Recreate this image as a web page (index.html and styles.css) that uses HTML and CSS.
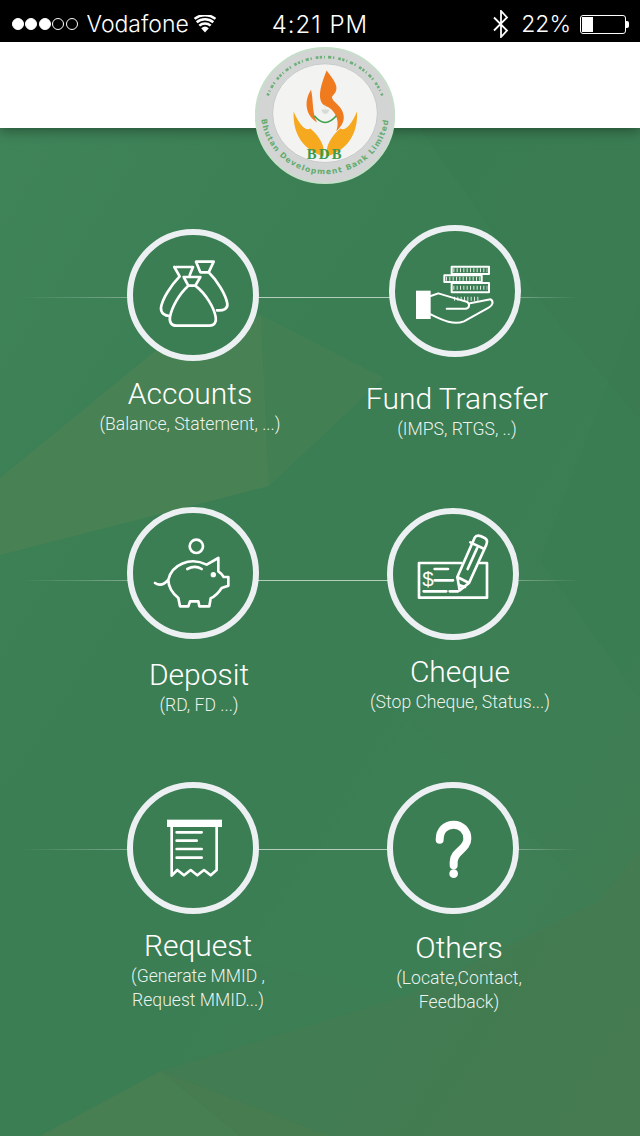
FILE: index.html
```html
<!DOCTYPE html>
<html lang="en">
<head>
<meta charset="utf-8">
<title>Bhutan Development Bank</title>
<link rel="stylesheet" href="styles.css">
</head>
<body>
<div class="page">
  <div class="status">
    <div class="status-left">
      <span class="signal"><i class="dot on"></i><i class="dot on"></i><i class="dot on"></i><i class="dot"></i><i class="dot"></i></span>
      <span class="carrier">Vodafone</span>
      <svg class="wifi" viewBox="0 0 22 18"><path d="M11 17.5 7.2 13.2a5.8 5.8 0 0 1 7.6 0Z" fill="#fff"/><path d="M5.3 10.6a8.8 8.8 0 0 1 11.4 0M2.7 7.2a13 13 0 0 1 16.6 0M.6 3.9a16.4 16.4 0 0 1 20.8 0" fill="none" stroke="#fff" stroke-width="2.5"/></svg>
    </div>
    <div class="clock">4:21 PM</div>
    <div class="status-right">
      <svg class="bt" viewBox="0 0 18 28"><path d="M2 7.5 15 20.5 9 27V1l6 6.5L2 20.5" fill="none" stroke="#fff" stroke-width="1.8"/></svg>
      <span class="pct">22%</span>
      <span class="battery"><span class="battery-fill"></span></span>
    </div>
  </div>

  <header class="head">
    <svg class="logo" viewBox="30 20 420 410">
      <defs>
        <path id="lower-arc" d="M48 215A192 186 0 0 0 432 215"/>
      </defs>
      <ellipse cx="240" cy="225" rx="208" ry="203" fill="#d2d5d4" stroke="#c5e0c8" stroke-width="5"/>
      <ellipse cx="240" cy="218" rx="157" ry="148" fill="#f3f3f2" stroke="#b9bdbc" stroke-width="2"/>
      <path d="M68 165A183 175 0 0 1 412 165" fill="none" stroke="#6fb07a" stroke-width="8" stroke-dasharray="7 6 3 9 10 5 4 12 8 4"/>
      <text class="logo-ring"><textPath href="#lower-arc" startOffset="50%" text-anchor="middle">Bhutan Development Bank Limited</textPath></text>
      <path d="M245 90C268 122 288 142 263 166C252 180 292 192 296 226C299 244 286 262 274 272C286 240 270 206 240 196C214 180 226 136 245 90Z" fill="#f07b1e"/>
      <path d="M198 148C174 186 184 226 216 246C200 216 206 180 198 148Z" fill="#f07b1e"/>
      <path d="M146 213C142 282 178 330 236 348C242 318 224 288 196 264C182 272 164 256 146 213Z" fill="#f6a91f"/>
      <path d="M336 213C340 282 304 330 246 348C240 318 258 288 286 264C300 272 318 256 336 213Z" fill="#f6a91f"/>
      <path d="M208 226Q240 266 274 226" fill="none" stroke="#3ea14c" stroke-width="5"/>
      <path d="M230 208H252Q249 220 241 220Q233 220 230 208ZM240 192L240 204" fill="#d5dcd5" stroke="#d5dcd5" stroke-width="1.5"/>
      <text class="logo-bdb" x="241" y="356" text-anchor="middle">BDB</text>
    </svg>
  </header>

  <main class="menu">
    <svg class="backdrop" viewBox="0 128 640 1008" preserveAspectRatio="none" aria-hidden="true">
      <defs>
        <linearGradient id="wash" x1="0" y1="0" x2="1" y2="1">
          <stop offset="0" stop-color="#3f8359"/>
          <stop offset=".35" stop-color="#3b7e53"/>
          <stop offset=".75" stop-color="#3d7e54"/>
          <stop offset="1" stop-color="#447b51"/>
        </linearGradient>
      </defs>
      <rect x="0" y="128" width="640" height="1008" fill="url(#wash)"/>
      <path d="M420 128H640V420L540 300Z" fill="#3a7a51" opacity=".45"/>
      <path d="M640 300 540 560 640 700Z" fill="#3a7a51" opacity=".35"/>
      <path d="M155 351 261 315 269 486 0 555V478Z" fill="#488254"/>
      <path d="M261 315 384 378 269 486Z" fill="#428053"/>
      <path d="M408 720 600 900 420 1000 240 960Z" fill="#40805a" opacity=".3"/>
      <path d="M600 900 640 850V1136H330L161 1071 408 995Z" fill="#48794f" opacity=".5"/>
      <path d="M161 1071 240 1136H40Z" fill="#487f52"/>
      <path d="M161 1071 330 1136H240Z" fill="#477c50"/>
    </svg>

    <section class="row row-one">
      <article class="cell">
        <div class="ring ring-accounts">
          <svg class="icon" viewBox="98 44 360 360"><g class="ink">
            <path d="M228 140H278L268 165M222 140 238 168C212 195 186 235 182 262C181 278 192 287 208 287"/>
            <path d="M287 124H340L325 156H300ZM325 156C350 180 376 222 381 250C383 265 370 272 350 270"/>
            <path d="M250 170H300L285 196H264ZM264 196C235 222 214 262 209 290C206 306 214 316 228 316H328C342 316 349 306 346 290C341 262 318 222 285 196"/>
          </g></svg>
        </div>
        <div class="caption cap-accounts"><h2>Accounts</h2><p>(Balance, Statement, ...)</p></div>
      </article>
      <article class="cell cell-right">
        <div class="ring ring-fund">
          <svg class="icon" viewBox="885 33 360 360"><g class="ink thin">
            <rect x="1055" y="140" width="112" height="22"/><rect x="1033" y="166" width="112" height="20"/><rect x="1055" y="189" width="112" height="28"/>
            <path class="ticks" d="M1060 151H1162M1038 176H1140M1060 203H1162M1062 236H1142"/>
            <path d="M992 228 1015 220 1055 232 1100 245C1112 252 1108 265 1096 266H1040M1110 250 1172 238C1182 245 1178 256 1166 263L1092 304C1062 316 1030 302 992 283"/>
            <rect class="solid" x="948" y="212" width="44" height="85"/>
          </g></svg>
        </div>
        <div class="caption cap-fund"><h2>Fund Transfer</h2><p>(IMPS, RTGS, ..)</p></div>
      </article>
    </section>

    <section class="row row-two">
      <article class="cell">
        <div class="ring ring-deposit">
          <svg class="icon" viewBox="99 40 360 360"><g class="ink">
            <circle cx="289" cy="140" r="20"/>
            <path d="M165 250Q185 264 205 240C215 195 270 170 320 195L355 175V215Q368 224 371 232H385V258L365 265Q350 288 332 296L328 320H298L295 305H270L265 320H240L235 295Q205 270 205 240"/>
            <path d="M262 208Q285 195 305 208"/>
            <circle class="solid" cx="340" cy="225" r="8"/>
          </g></svg>
        </div>
        <div class="caption cap-deposit"><h2>Deposit</h2><p>(RD, FD ...)</p></div>
      </article>
      <article class="cell cell-right">
        <div class="ring ring-cheque">
          <svg class="icon" viewBox="880 43 360 360"><g class="ink">
            <path d="M1085 190H958V294H1162V190H1140"/>
            <path d="M1005 208H1045M1005 242H1060M972 275H1040M1050 275H1075"/>
            <path d="M1080 272 1073 232 1125 114Q1131 104 1144 110L1155 115Q1166 121 1160 135L1108 250ZM1073 232 1108 250M1112 128 1154 148M1132 146 1104 208M1078 256 1096 262"/>
          </g><text class="dollar" x="968" y="259">$</text></svg>
        </div>
        <div class="caption cap-cheque"><h2>Cheque</h2><p>(Stop Cheque, Status...)</p></div>
      </article>
    </section>

    <section class="row row-three">
      <article class="cell">
        <div class="ring">
          <svg class="icon" viewBox="99 40 360 360"><g class="ink">
            <rect class="solid" x="201" y="135" width="165" height="22"/>
            <path d="M215 157V303L232 286 252 302 272 286 292 302 312 286 332 302 350 286V157"/>
            <path d="M230 173H305M230 198H290M230 223H305M230 249H305"/>
          </g></svg>
        </div>
        <div class="caption cap-request"><h2>Request</h2><p>(Generate MMID ,<br>Request MMID...)</p></div>
      </article>
      <article class="cell cell-right">
        <div class="ring ring-others">
          <svg class="icon" viewBox="880 40 360 360">
            <path class="mark" d="M1020 195C1020 165 1040 150 1062 150C1085 150 1103 168 1103 192C1103 225 1062 228 1062 262V272"/>
            <circle class="mark-dot" cx="1062" cy="297" r="13"/>
          </svg>
        </div>
        <div class="caption cap-others"><h2>Others</h2><p>(Locate,Contact,<br>Feedback)</p></div>
      </article>
    </section>
  </main>
</div>
</body>
</html>
```
FILE: styles.css
```css
* { box-sizing: border-box; }
html, body { margin: 0; padding: 0; }
.page {
  width: 640px;
  height: 1136px;
  overflow: hidden;
  display: flex;
  flex-direction: column;
  font-family: Roboto, "Liberation Sans", sans-serif;
  background: #3b7e53;
}

/* status bar */
.status {
  height: 42px;
  flex: none;
  background: #000;
  color: #fff;
  display: grid;
  grid-template-columns: 1fr auto 1fr;
  align-items: center;
  padding: 6px 12px 0;
  font-family: Inter, "Liberation Sans", sans-serif;
  font-weight: 300;
  font-size: 23px;
}
.status-left, .status-right { display: flex; align-items: center; }
.status-right { justify-content: flex-end; }
.signal { display: flex; gap: 1.4px; }
.dot {
  width: 12px;
  height: 12px;
  border-radius: 50%;
  border: 1px solid #fff;
}
.dot.on { background: #fff; }
.carrier { margin-left: 9px; }
.wifi { width: 22px; height: 18px; margin-left: 5px; }
.clock { font-size: 24px; letter-spacing: 1px; }
.bt { width: 18px; height: 28px; }
.pct { margin-left: 11px; }
.battery {
  width: 46px;
  height: 19px;
  margin-left: 9px;
  margin-right: 2px;
  border: 1px solid #fff;
  border-radius: 3px;
  padding: 1px;
  display: block;
  position: relative;
}
.battery::after {
  content: "";
  position: absolute;
  right: -4px;
  top: 5px;
  width: 3px;
  height: 7px;
  background: #fff;
  border-radius: 0 2px 2px 0;
}
.battery-fill { display: block; width: 11px; height: 100%; background: #fff; }

/* header */
.head {
  height: 86px;
  flex: none;
  background: #fff;
  position: relative;
  z-index: 2;
  box-shadow: 0 2px 12px rgba(0, 0, 0, .4);
}
.logo {
  position: absolute;
  left: 255px;
  top: 5px;
  width: 140px;
  height: 137px;
}
.logo-ring {
  font-family: "DejaVu Sans", sans-serif;
  font-weight: 700;
  font-size: 23px;
  letter-spacing: 3.2px;
  fill: #62ac6e;
}
.logo-bdb {
  font-family: "Liberation Serif", serif;
  font-weight: 700;
  font-size: 44px;
  letter-spacing: 7px;
  fill: #3d9a49;
}

/* menu */
.menu {
  flex: 1;
  position: relative;
  padding-top: 97px;
  color: #fff;
}
.backdrop {
  position: absolute;
  left: 0;
  top: 0;
  width: 640px;
  height: 1008px;
}
.row {
  position: relative;
  display: grid;
  grid-template-columns: 320px 320px;
  align-items: start;
}
.row::before {
  content: "";
  position: absolute;
  left: 20px;
  width: 560px;
  height: 1px;
  background: linear-gradient(90deg,
    rgba(255, 255, 255, 0) 0,
    rgba(255, 255, 255, .32) 107px,
    rgba(255, 255, 255, .62) 240px,
    rgba(255, 255, 255, .62) 365px,
    rgba(255, 255, 255, .3) 500px,
    rgba(255, 255, 255, 0) 560px);
}
.row-one { height: 282px; }
.row-one::before { top: 72px; }
.row-two { height: 275px; }
.row-two::before { top: 73px; }
.row-three::before { top: 67px; }

.cell { position: relative; padding-left: 127px; }
.cell-right { padding-left: 67px; }

.ring {
  width: 132px;
  height: 132px;
  border-radius: 50%;
  border: 6px solid #edf0f3;
  background: #3b7e53;
}
.ring-accounts { margin-top: 4px; }
.ring-fund { margin-left: 2px; }
.ring-cheque { margin-top: 1px; }
.icon { display: block; width: 120px; height: 120px; }
.ink {
  fill: none;
  stroke: #fff;
  stroke-width: 8;
  stroke-linejoin: round;
  stroke-linecap: round;
}
.ink.thin { stroke-width: 6; }
.ink .solid { fill: #fff; stroke: none; }
.ink .ticks { stroke-width: 12; stroke-dasharray: 3 7; stroke-linecap: butt; opacity: .85; }
.dollar {
  font-family: "Liberation Sans", sans-serif;
  font-size: 62px;
  fill: #fff;
}
.mark { fill: none; stroke: #fff; stroke-width: 24; stroke-linecap: round; }
.mark-dot { fill: #fff; }

/* captions */
.caption { width: 300px; text-align: center; }
.caption h2 {
  margin: 0;
  font-weight: 300;
  font-size: 30px;
  line-height: 36px;
}
.caption p {
  margin: 0;
  font-weight: 300;
  font-size: 17.6px;
  line-height: 24px;
  color: rgba(255, 255, 255, .92);
}
.cap-accounts { margin-left: -87px; margin-top: 15px; }
.cap-fund { margin-left: -80px; margin-top: 24px; }
.cap-deposit { margin-left: -78px; margin-top: 18px; }
.cap-cheque { margin-left: -77px; margin-top: 14px; }
.cap-request { margin-left: -79px; margin-top: 14px; }
.cap-others { margin-left: -78px; margin-top: 16px; }
```
